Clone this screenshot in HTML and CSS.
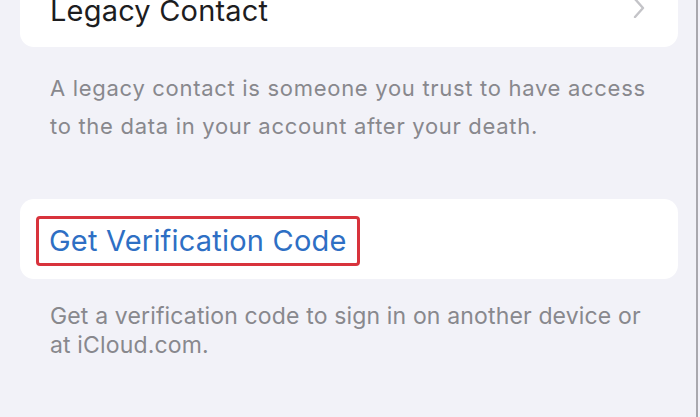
FILE: index.html
```html
<!DOCTYPE html>
<html lang="en">
<head>
  <meta charset="UTF-8" />
  <meta name="viewport" content="width=device-width, initial-scale=1.0" />
  <title>Legacy Contact</title>
  <link rel="stylesheet" href="styles.css">
</head>
<body>
  <div class="screen">
    <div class="group top-group">
      <div class="row">
        <span class="row-label">Legacy Contact</span>
        <svg class="chevron" width="12" height="20" viewBox="0 0 12 20">
          <path d="M2 1 L10 10 L2 19" fill="none" stroke="#c4c4c8" stroke-width="2.4" stroke-linecap="round" stroke-linejoin="round"/>
        </svg>
      </div>
    </div>
    <p class="footer legacy-footer">A legacy contact is someone you trust to have access to the data in your account after your death.</p>

    <div class="group code-group">
      <div class="highlight">
        <span class="action">Get Verification Code</span>
      </div>
    </div>
    <p class="footer code-footer">Get a verification code to sign in on another device or at iCloud.com.</p>
  </div>
  <div class="edge"></div>
</body>
</html>
```

FILE: styles.css
```css
body {
  margin: 0;
  display: flex;
  height: 417px;
  overflow: hidden;
  background: #f3f2f9;
  font-family: Inter, 'Noto Sans', sans-serif;
}
.screen {
  width: 696px;
  background: #f2f2f8;
}
.edge {
  width: 2px;
  background: #a9a8ae;
}
.group {
  background: #fff;
  margin: 0 18px 0 20px;
  border-radius: 14px;
}
.top-group {
  margin-top: -16px;
  border-radius: 0 0 14px 14px;
}
.row {
  height: 63px;
  display: flex;
  align-items: center;
  justify-content: space-between;
  padding: 0 33px 0 30px;
}
.row-label {
  font-size: 29px;
  letter-spacing: 0.2px;
  color: #1d1d1f;
  margin-top: -11px;
}
.chevron {
  margin-top: -15px;
}
.footer {
  margin: 0;
  padding: 0 36px 0 50px;
  color: #88888d;
}
.legacy-footer {
  padding-top: 22px;
  font-size: 22px;
  letter-spacing: 0.7px;
  line-height: 38px;
  height: 130px;
  padding-right: 46px;
}
.code-group {
  height: 80px;
  padding: 17px 0 0 16px;
  box-sizing: border-box;
}
.highlight {
  display: inline-block;
  border: 3px solid #d8333c;
  border-radius: 4px;
  padding: 0 10px 0 10px;
  height: 44px;
  line-height: 44px;
}
.action {
  font-size: 29px;
  letter-spacing: 0.2px;
  color: #2e6fc4;
}
.code-footer {
  padding-top: 23px;
  padding-right: 46px;
  font-size: 23px;
  line-height: 29px;
  letter-spacing: 0.15px;
}
```
